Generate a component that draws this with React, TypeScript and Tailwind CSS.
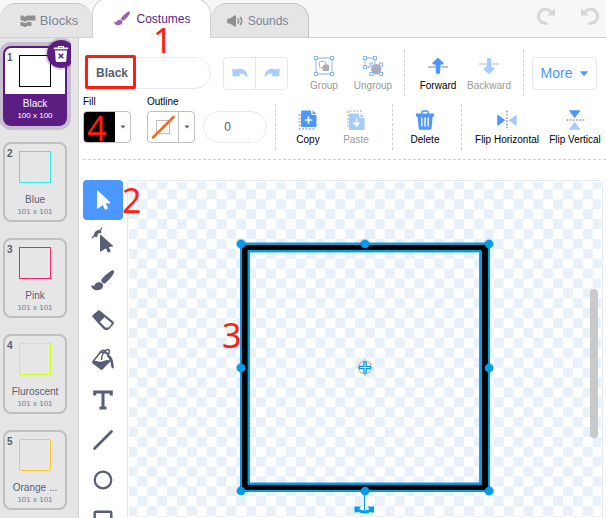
import React from "react";

type Costume = { name: string; size: string; color: string; radius: string };

const costumes: Costume[] = [
  { name: "Black", size: "100 x 100", color: "border-black", radius: "" },
  { name: "Blue", size: "101 x 101", color: "border-[#33eee6]", radius: "" },
  { name: "Pink", size: "101 x 101", color: "border-[#ff1f70]", radius: "" },
  { name: "Fluroscent", size: "101 x 101", color: "border-[#ccff1a]", radius: "" },
  { name: "Orange ...", size: "101 x 101", color: "border-[#ffc533]", radius: "rounded-xs" },
];

function Icon({ children, className = "size-5" }: { children: React.ReactNode; className?: string }) {
  return (
    <svg viewBox="0 0 20 20" className={`${className} shrink-0`} fill="none" aria-hidden="true">
      {children}
    </svg>
  );
}

function BlocksIcon() {
  return (
    <svg viewBox="0 0 16 12" className="h-3 w-4" fill="#8f8f8f" aria-hidden="true">
      <path d="M.5 1.2Q.5.5 1.2.5H3l1 1h2l1-1h7.800q.7 0 .7.700v3.600q0 .7-.7.700H7l-1 1H4l-1-1H1.200Q.5 5.500.5 4.800Z" />
      <path d="M.5 7H2.800l1 1h2.400l1-1h3.600q.7 0 .7.700v2.600q0 .7-.7.700H7l-1 1H4l-1-1H1.200q-.7 0-.7-.7Z" />
    </svg>
  );
}

function BrushShape({ fill, bristle }: { fill: string; bristle: string }) {
  return (
    <>
      <path d="M22.700.6c.8.7.3 2.500-.8 4.200-1.500 2.400-4.600 6.100-7.300 8.200-.9.700-1.900.7-2.800-.1l-1.100-1.100c-.7-.9-.7-1.900.1-2.800C13.200 6.200 16.800 3.300 19.200 1.600 20.700.5 22 0 22.700.6Z" fill={fill} />
      <path d="M9 12.200c2 .2 3.300 1.900 3 4-.5 3.300-5 5-8.600 3.500C1.700 19 .5 17.500.3 16.300c-.1-.9.600-.8 1.300-.7 1.200.2 1.900-.1 2.500-1.200.9-1.600 2.800-2.500 4.900-2.200Z" fill={bristle} />
    </>
  );
}

function UndoIcon({ flip = false }: { flip?: boolean }) {
  return (
    <svg viewBox="0 0 16 10" className={flip ? "h-2.5 w-4 -scale-x-100" : "h-2.5 w-4"} fill="#a6cbff" aria-hidden="true">
      <path d="M.5 1.300Q.4.200 1.500.7L3 1.800C7.200-.5 13.700.3 15.300 6.800q.4 1.900-.6 1.900-.6 0-1-.7C12.300 5.600 9.800 5 7 5.600l1.100 1.200q.8 1.300-.6 1.500H1.700Q.6 8.300.5 7.200Z" />
    </svg>
  );
}

function Handles({ points }: { points: number[][] }) {
  return (
    <>
      {points.map(([x, y]) => (
        <rect key={`${x}-${y}`} x={x - 1.500} y={y - 1.500} width="3" height="3" fill="#fff" stroke="#85b9ff" />
      ))}
    </>
  );
}

function GroupIcon() {
  return (
    <Icon>
      <path d="M2 2h16v16H2z" stroke="#a6cbff" strokeWidth="1.300" />
      <rect x="5.500" y="5.500" width="6" height="6" rx="1" fill="#fff" stroke="#a9adba" />
      <rect x="8.500" y="8.500" width="6.500" height="6.500" rx="1" fill="#a9adba" />
      <path d="M8.500 11V8.500H11" stroke="#fff" />
      <Handles points={[[2, 2], [18, 2], [2, 18], [18, 18]]} />
    </Icon>
  );
}

function UngroupIcon() {
  return (
    <Icon>
      <path d="M2 2h10v6M2 2v9h5" stroke="#a6cbff" strokeWidth="1.300" />
      <circle cx="13.200" cy="13.200" r="5.200" fill="#a9adba" />
      <path d="M3 11q3 2 6-2" stroke="#a9adba" strokeDasharray="1 1" />
      <Handles points={[[2, 2], [12, 2], [2, 11], [8.500, 8.500], [18, 8.500], [8.500, 18], [18, 18]]} />
    </Icon>
  );
}

function LayerIcon({ down = false }: { down?: boolean }) {
  return (
    <Icon>
      <path d="M0 11h7M13.500 11h6.500" stroke={down ? "#b5b8c4" : "#7b8192"} transform={down ? "translate(0 -3)" : undefined} />
      <path
        d="M9.300 2.200q.7-.7 1.400 0l4.700 4.600q1 1.500-.6 1.700H12.700L12 17q-.2 1-2 1T8 17L7.300 8.500H5.200q-1.600-.2-.6-1.700Z"
        fill={down ? "#a6cbff" : "#4c97ff"}
        transform={down ? "rotate(180 10 10)" : undefined}
      />
    </Icon>
  );
}

function CopyIcon({ paste = false }: { paste?: boolean }) {
  const fill = paste ? "#a6cbff" : "#4c97ff";
  return (
    <Icon>
      {paste ? (
        <path d="M2 17V1h14" stroke="#c2c5ce" strokeWidth="1.500" strokeDasharray="2 1.500" />
      ) : (
        <path d="M1.500 4v15h15" stroke="#a9adba" strokeWidth="1.500" strokeDasharray="2 1.500" />
      )}
      <g transform={paste ? "translate(0 3)" : undefined}>
        <path d="M3 1.500Q3 .5 4 .5h9V3q0 2 2 2h3.500v11q0 1-1 1H4q-1 0-1-1Z" fill={fill} />
        <path d="M14.500.5 18.500 4H15.500q-1 0-1-1Z" fill={fill} />
        {paste ? (
          <path d="M10.500 5.500V11M8.300 10.300l2.200 2.500 2.200-2.500Z" fill="#fff" stroke="#fff" strokeWidth="1.500" />
        ) : (
          <path d="M10.500 7v6M7.500 10h6" stroke="#fff" strokeWidth="1.700" strokeLinecap="round" />
        )}
      </g>
    </Icon>
  );
}

function TrashIcon() {
  return (
    <Icon>
      <path d="M7 4V2q0-1 1-1h4q1 0 1 1v2" stroke="#4c97ff" strokeWidth="1.500" />
      <path d="M1.500 3.500h17q.6 0 .6.700v1.600q0 .7-.6.700h-.8L16.500 18.500q-.2 1.300-1.300 1.300H5q-1.200 0-1.300-1.300L2.500 6.500h-1q-.6 0-.6-.7V4.200q0-.7.600-.7Z" fill="#4c97ff" />
      <path d="M6.800 8v8M10 8v8M13.200 8v8" stroke="#fff" strokeWidth="1.400" strokeLinecap="round" />
    </Icon>
  );
}

function FlipIcon({ vertical = false }: { vertical?: boolean }) {
  return (
    <Icon>
      <g transform={vertical ? "rotate(90 10 10)" : undefined}>
        <path d="M10 1.500v18" stroke="#a9adba" strokeWidth="2" strokeLinecap="round" strokeDasharray="0.100 3.100" />
        <path d="M.8 5.200 7.500 10.300.8 15.400Z" fill="#4c97ff" stroke="#4c97ff" strokeLinejoin="round" />
        <path d="M19.200 5.200 12.500 10.300l6.700 5.100Z" fill="#a6cbff" stroke="#a6cbff" strokeLinejoin="round" />
      </g>
    </Icon>
  );
}

function ToolButton({
  label,
  icon,
  disabled = false,
  className = "w-12",
}: {
  label: string;
  icon: React.ReactNode;
  disabled?: boolean;
  className?: string;
}) {
  return (
    <button
      type="button"
      disabled={disabled}
      className={`${className} flex shrink-0 flex-col items-center gap-1 pt-0.5 text-[10px] leading-3 whitespace-nowrap ${disabled ? "text-[#999]" : "text-black"}`}
    >
      {icon}
      {label}
    </button>
  );
}

function Divider({ className }: { className: string }) {
  return <div className={`${className} h-[46px] shrink-0 border-l border-dashed border-[#d0d0d0]`} />;
}

function CostumeCard({ costume, index }: { costume: Costume; index: number }) {
  const selected = index === 0;
  return (
    <li
      className={`relative flex h-20 w-16 flex-col items-center rounded-lg border-2 ${
        selected
          ? "border-[#5c1d82] bg-white ring-4 ring-[#5c1d82]/20"
          : "border-[#bfbfbf] bg-[#e6e6e6]"
      }`}
    >
      <span className="absolute top-1 left-0.5 text-[10px] leading-3 font-bold text-[#575e75]">{index + 1}</span>
      <div className={`mt-[7px] size-8 shrink-0 border ${costume.color} ${costume.radius}`} />
      <div
        className={`mt-[7px] flex w-full flex-1 flex-col items-center pt-1 text-center whitespace-nowrap ${
          selected ? "bg-[#5c1d82] text-white" : "text-[#575e75]"
        }`}
      >
        <span className="text-[10px] leading-3">{costume.name}</span>
        <span className={`text-[8px] leading-3 ${selected ? "" : "text-[#777c8c]"}`}>{costume.size}</span>
      </div>
      {selected && (
        <button
          type="button"
          aria-label="Delete costume"
          className="absolute -top-2 -right-2.5 flex size-7 items-center justify-center rounded-full bg-[#5c1d82] ring-2 ring-[#5c1d82]/20"
        >
          <svg viewBox="0 0 16 18" className="h-[18px] w-4" aria-hidden="true">
            <path d="M5.500 3V1.500h5V3" fill="none" stroke="#fff" strokeWidth="1.200" />
            <path d="M1.500 2.500h13q.8 0 .8.800T14.500 4.300h-13Q.7 4.200.7 3.400t.8-.9Z" fill="#fff" />
            <path d="M2 5.500h12l-.7 10q-.1 1.500-1.500 1.500H4.200q-1.400 0-1.500-1.500Z" fill="#fff" />
            <path d="M5.700 8.700l4.600 4.600M10.300 8.700l-4.600 4.600" stroke="#5c1d82" strokeWidth="1.500" />
          </svg>
        </button>
      )}
    </li>
  );
}

function ColorPicker({ id, label, children }: { id: string; label: string; children: React.ReactNode }) {
  return (
    <div className="mb-[7px] flex shrink-0 flex-col gap-[3px]">
      <label htmlFor={id} className="text-[10px] leading-3 text-black">
        {label}
      </label>
      <button id={id} type="button" className="flex h-8 w-12 rounded-sm border border-[#bfbfbf] bg-white">
        {children}
        <span className="flex h-full flex-1 items-center justify-center">
          <svg viewBox="0 0 6 4" className="h-1 w-1.5" fill="#575e75" aria-hidden="true">
            <path d="M.5.500h5L3 3.500Z" />
          </svg>
        </span>
      </button>
    </div>
  );
}

const ink = "#575e75";

const tools: { name: string; icon: React.ReactNode }[] = [
  {
    name: "Select",
    icon: <path d="M4 1.200Q4 0 5 .8L17 12q.8 1-.4 1.200l-3.900.3 2.100 4.300q.2.700-.4 1l-1.700.8q-.7.200-1-.4L9.800 14.900 5 18.500q-1 .6-1-.6Z" fill="#fff" />,
  },
  {
    name: "Reshape",
    icon: (
      <>
        <path d="M-1.200 7.800Q.5 7 2 5M6 1.500Q8.500 0 8.800-2.500" stroke={ink} strokeWidth="1.300" />
        <path d="M.8 5.200Q1.500 0 6.800-.3L8.800 2.300Q8 3.300 6.500 3.200 4.300 3.300 4.600 6L3.500 7.300Q1.500 7 .8 5.200Z" fill={ink} />
        <path d="M7 5.200q0-1 .9-.3L19.800 15.500q.8.900-.4 1.100l-3.600.3 1.700 3.800q.2.700-.4 1l-1.500.7q-.7.200-1-.4l-1.700-3.700L8 21.500q-1 .6-1-.5Z" fill={ink} />
      </>
    ),
  },
  {
    name: "Brush",
    icon: (
      <g transform="translate(-2 0)">
        <BrushShape fill={ink} bristle={ink} />
      </g>
    ),
  },
  {
    name: "Eraser",
    icon: (
      <>
        <path d="M7 .8 20.500 11.700q1 1 .1 2.200l-4.300 5.200q-.8.900-2 .9h-1.800q-1 0-1.800-.8L-.3 7.200q-.8-.9 0-1.900L4.700.8Q5.800-.1 7 .8Z" fill={ink} />
        <path d="m7 12 4.500-4.800 6.800 5.600q.6.600.1 1.300l-2.300 2.800q-.6.700-1.500.7h-1.400q-.7 0-1.300-.6Z" fill="#fff" />
      </>
    ),
  },
  {
    name: "Fill",
    icon: (
      <>
        <path d="M0 11.500 7.500 2 15 3.500l2.500 7L8.500 19Z" fill="#fff" stroke={ink} strokeWidth="1.500" strokeLinejoin="round" />
        <path d="M-.8 12q1-1.800 4.500-1 4 1.500 7.500-.3 3-1.300 6 0l-7.200 8.200q-1.500 1.500-3 .2L-.4 13.500Z" fill={ink} />
        <path d="M8.500 10C8.500 3.500 12-1 15.800-.3q2 2.200-1.800 6.500M6.500 3.500Q9-1.500 12.500 1.500 15 3.500 16 8" stroke={ink} strokeWidth="1.500" />
        <path d="M15.500 5.500q3 0 4.300 5 .9 4 1 7-.8 1.800-2.300 0-.3-4-1.500-6.500Z" fill={ink} />
      </>
    ),
  },
  {
    name: "Text",
    icon: <path d="M1.700 5.500V2h16.600v3.500M10 2v16M6.500 18h7" stroke={ink} strokeWidth="3" />,
  },
  { name: "Line", icon: <path d="M1.500 18.500 18.500 1.500" stroke={ink} strokeWidth="2.800" strokeLinecap="round" /> },
  { name: "Circle", icon: <circle cx="10" cy="10" r="8.300" stroke={ink} strokeWidth="2.200" /> },
  { name: "Rectangle", icon: <rect x="1.700" y="1.700" width="16.600" height="16.600" rx="1" stroke={ink} strokeWidth="2.400" /> },
];

const handlePoints = [
  [113, 63],
  [237, 63],
  [361, 63],
  [113, 187],
  [361, 187],
  [113, 310],
  [237, 310],
  [361, 310],
];

function Canvas() {
  return (
    <svg className="absolute inset-0 size-full" aria-label="Costume canvas">
      <defs>
        <pattern id="checks" x="237" y="186.600" width="19.800" height="19.800" patternUnits="userSpaceOnUse">
          <rect width="19.800" height="19.800" fill="#fff" />
          <rect width="9.900" height="9.900" fill="#e8f0f9" />
          <rect x="9.900" y="9.900" width="9.900" height="9.900" fill="#e8f0f9" />
        </pattern>
      </defs>
      <rect width="100%" height="100%" fill="url(#checks)" />
      <rect width="100%" height="100%" fill="none" stroke="#fff" strokeWidth="2" />
      <g fill="none">
        <rect x="117" y="67" width="240" height="239" stroke="#000" strokeWidth="7" strokeLinejoin="round" />
        <rect x="113" y="62.500" width="248" height="247.500" stroke="#009dec" strokeWidth="2" />
        <rect x="120.800" y="70.200" width="231.500" height="232.500" stroke="#009dec" strokeWidth="2.400" />
      </g>
      <g fill="none" stroke="#c4c4c4" strokeWidth="1.500">
        <circle cx="237" cy="186.500" r="6.500" />
        <path d="M228.500 186.500h17M237 178v17" />
      </g>
      <path d="M231 186.500h12M237 180.500v12" stroke="#009dec" strokeWidth="3.500" />
      <path d="M232 186.500h10M237 181.500v10" stroke="#cfe9f8" />
      <path d="M236.500 310v20" stroke="#009dec" />
      <path d="M229 328.500q7.500 5 15 0" fill="none" stroke="#009dec" strokeWidth="3" />
      <path d="M226.500 325.500h6.500l-1.500 2-2 4h-3ZM246 325.500h-6.500l1.500 2 2 4h3Z" fill="#009dec" />
      {handlePoints.map(([x, y]) => (
        <g key={`${x}-${y}`}>
          <circle cx={x} cy={y - 0.500} r="5" fill="#000" opacity="0.150" />
          <circle cx={x} cy={y} r="4.300" fill="#009dec" />
        </g>
      ))}
    </svg>
  );
}

function Mark({ children, className }: { children: string; className: string }) {
  return (
    <span className={`${className} pointer-events-none absolute font-['Noto_Sans',sans-serif] text-[34px] leading-8 text-[#ff1e10]`}>
      {children}
    </span>
  );
}

export default function App() {
  return (
    <div className="flex h-screen flex-col overflow-hidden bg-white font-['Liberation_Sans',Arial,sans-serif] text-xs text-[#575e75]">
      <header className="flex h-[38px] shrink-0 items-end border-b border-[#d0d0d0] bg-[#f7f7f7]">
        <nav className="flex h-full items-end" aria-label="Editor tabs">
          <button type="button" className="flex h-[34px] w-[92px] items-center justify-center gap-1 rounded-t-2xl border-t border-[#c4c4c4] bg-[#e5e5e5] pl-1.5 text-[13px] text-[#7f8496]">
            <BlocksIcon />
            Blocks
          </button>
          <button type="button" className="relative -mb-px flex h-[40px] w-[119px] items-center justify-center gap-1.5 rounded-t-2xl border border-b-0 border-[#d0d0d0] bg-white pl-0.5 text-[#5c1d82]">
            <svg viewBox="0 0 23 21" className="h-[15px] w-4" aria-hidden="true">
              <BrushShape fill="#a05fb0" bristle="#a05fb0" />
            </svg>
            Costumes
            <Mark className="top-[25px] left-[60px]">1</Mark>
          </button>
          <button type="button" className="flex h-[34px] w-[98px] items-center justify-center gap-[5px] rounded-t-2xl border-t border-r border-[#c4c4c4] bg-[#e5e5e5] pr-1 text-[#7f8496]">
            <svg viewBox="0 0 16 12" className="h-3 w-4" aria-hidden="true">
              <path d="M.3 4.500Q.3 3.600 1.200 3.600H3L7.500.4Q9 0 9 1.300v9.400q0 1.300-1.500.9L3 8.600H1.200Q.3 8.600.3 7.700Z" fill="#8f8f8f" />
              <path d="M11 4q1.200 2 0 4M13.500 2.500q2.500 3.500 0 7" fill="none" stroke="#8f8f8f" strokeWidth="1.600" strokeLinecap="round" />
            </svg>
            Sounds
          </button>
        </nav>
        <div className="ml-auto flex h-full items-center gap-6 pr-1.5 pb-1.5">
          <button type="button" aria-label="Redo">
            <Icon>
              <path d="M11.500 17A7 7 0 1 1 15.300 6.500" stroke="#d6d6d6" strokeWidth="3" />
              <path d="M19 2v7.500h-8Z" fill="#d6d6d6" />
            </Icon>
          </button>
          <button type="button" aria-label="Undo">
            <Icon>
              <path d="M8.500 17A7 7 0 1 0 4.700 6.500" stroke="#d6d6d6" strokeWidth="3" />
              <path d="M1 2v7.500h8Z" fill="#d6d6d6" />
            </Icon>
          </button>
        </div>
      </header>

      <div className="flex min-h-0 flex-1">
        <aside className="w-[79px] shrink-0 overflow-hidden border-r border-[#d0d0d0] bg-[#e5e5e5]">
          <ul className="flex w-[71px] flex-col gap-4 overflow-hidden pt-2 pl-[3px]">
            {costumes.map((costume, index) => (
              <CostumeCard key={costume.name} costume={costume} index={index} />
            ))}
          </ul>
        </aside>

        <main className="flex min-w-0 flex-1 flex-col overflow-hidden pt-3 pl-1">
          <div className="flex h-[46px] shrink-0 items-center">
            <div className="relative mr-3 w-32 shrink-0">
              <input
                aria-label="Costume name"
                defaultValue="Black"
                className="block h-8 w-full rounded-full border border-[#e6ebf2] bg-white px-3 font-bold text-[#575e75] outline-none"
              />
              <span className="pointer-events-none absolute -top-0.5 left-0.5 h-[34px] w-[51px] rounded-xs border-3 border-[#ff1e10]" />
            </div>
            <div className="mr-3 flex h-[33px] w-[65px] shrink-0 rounded-sm border border-[#e3e8ef]">
              <button type="button" aria-label="Undo edit" disabled className="flex flex-1 items-center justify-center border-r border-[#e3e8ef]">
                <UndoIcon />
              </button>
              <button type="button" aria-label="Redo edit" disabled className="flex flex-1 items-center justify-center">
                <UndoIcon flip />
              </button>
            </div>
            <ToolButton label="Group" icon={<GroupIcon />} disabled />
            <ToolButton label="Ungroup" icon={<UngroupIcon />} disabled className="w-[50px]" />
            <Divider className="mr-2 ml-1.5" />
            <ToolButton label="Forward" icon={<LayerIcon />} className="w-[50px]" />
            <ToolButton label="Backward" icon={<LayerIcon down />} disabled className="w-[52px]" />
            <Divider className="mx-2" />
            <button type="button" className="flex h-[33px] w-[65px] shrink-0 items-center justify-center gap-2 rounded-sm border border-[#e3e8ef] text-sm text-[#4c97ff]">
              More
              <svg viewBox="0 0 8 5" className="h-[5px] w-2" fill="#4c97ff" aria-hidden="true">
                <path d="M.8.300h6.400q.9.200.3 1L4.600 4.500q-.6.600-1.200 0L.5 1.300q-.6-.8.300-1Z" />
              </svg>
            </button>
          </div>

          <div className="flex h-[64px] shrink-0 items-end border-b border-dashed border-[#d0d0d0] pb-[9px]">
            <ColorPicker id="fill" label="Fill">
              <span className="relative h-full w-[31px] rounded-l-[3px] bg-black">
                <Mark className="top-0 left-[3px]">4</Mark>
              </span>
            </ColorPicker>
            <div className="w-4 shrink-0" />
            <ColorPicker id="outline" label="Outline">
              <span className="h-full w-[31px] border-r border-[#bfbfbf]">
                <svg viewBox="0 0 30 30" className="size-[30px]" fill="none" aria-hidden="true">
                  <rect x="8.500" y="8.500" width="13" height="13" stroke="#bfbfbf" />
                  <path d="M5 25.500 25.500 5" stroke="#ff661a" strokeWidth="2.500" strokeLinecap="round" />
                </svg>
              </span>
            </ColorPicker>
            <input
              aria-label="Outline width"
              defaultValue="0"
              className="mb-[7px] ml-2 block h-8 w-16 shrink-0 rounded-full border border-[#e6ebf2] bg-white pr-[15px] text-center text-[#575e75] outline-none"
            />
            <Divider className="mx-2" />
            <div className="mb-1 flex">
              <ToolButton label="Copy" icon={<CopyIcon />} />
              <ToolButton label="Paste" icon={<CopyIcon paste />} disabled />
            </div>
            <Divider className="mr-2 ml-3" />
            <div className="mb-1">
              <ToolButton label="Delete" icon={<TrashIcon />} />
            </div>
            <Divider className="mx-3" />
            <div className="mb-1 flex gap-2">
              <ToolButton label="Flip Horizontal" icon={<FlipIcon />} className="w-[66px]" />
              <ToolButton label="Flip Vertical" icon={<FlipIcon vertical />} className="w-[54px]" />
            </div>
          </div>

          <div className="mt-5 flex min-h-0 flex-1">
            <div className="flex w-10 shrink-0 flex-col" role="toolbar" aria-label="Drawing tools">
              {tools.map((tool, index) => (
                <button
                  key={tool.name}
                  type="button"
                  aria-label={tool.name}
                  className={`flex size-10 shrink-0 items-center justify-center rounded-sm ${index === 0 ? "bg-[#4c97ff]" : ""}`}
                >
                  <Icon className="size-5 overflow-visible">{tool.icon}</Icon>
                </button>
              ))}
            </div>
            <div className="relative mr-[3px] ml-1 min-w-0 flex-1 rounded-t-sm border border-b-0 border-[#e3e8ef]">
              <Canvas />
              <div className="absolute top-[108px] right-1 h-[149px] w-2 rounded-full bg-[#c9c9c9]" />
              <Mark className="top-[3px] -left-1.5">2</Mark>
              <Mark className="top-[138px] left-[94px]">3</Mark>
            </div>
          </div>
        </main>
      </div>
    </div>
  );
}
